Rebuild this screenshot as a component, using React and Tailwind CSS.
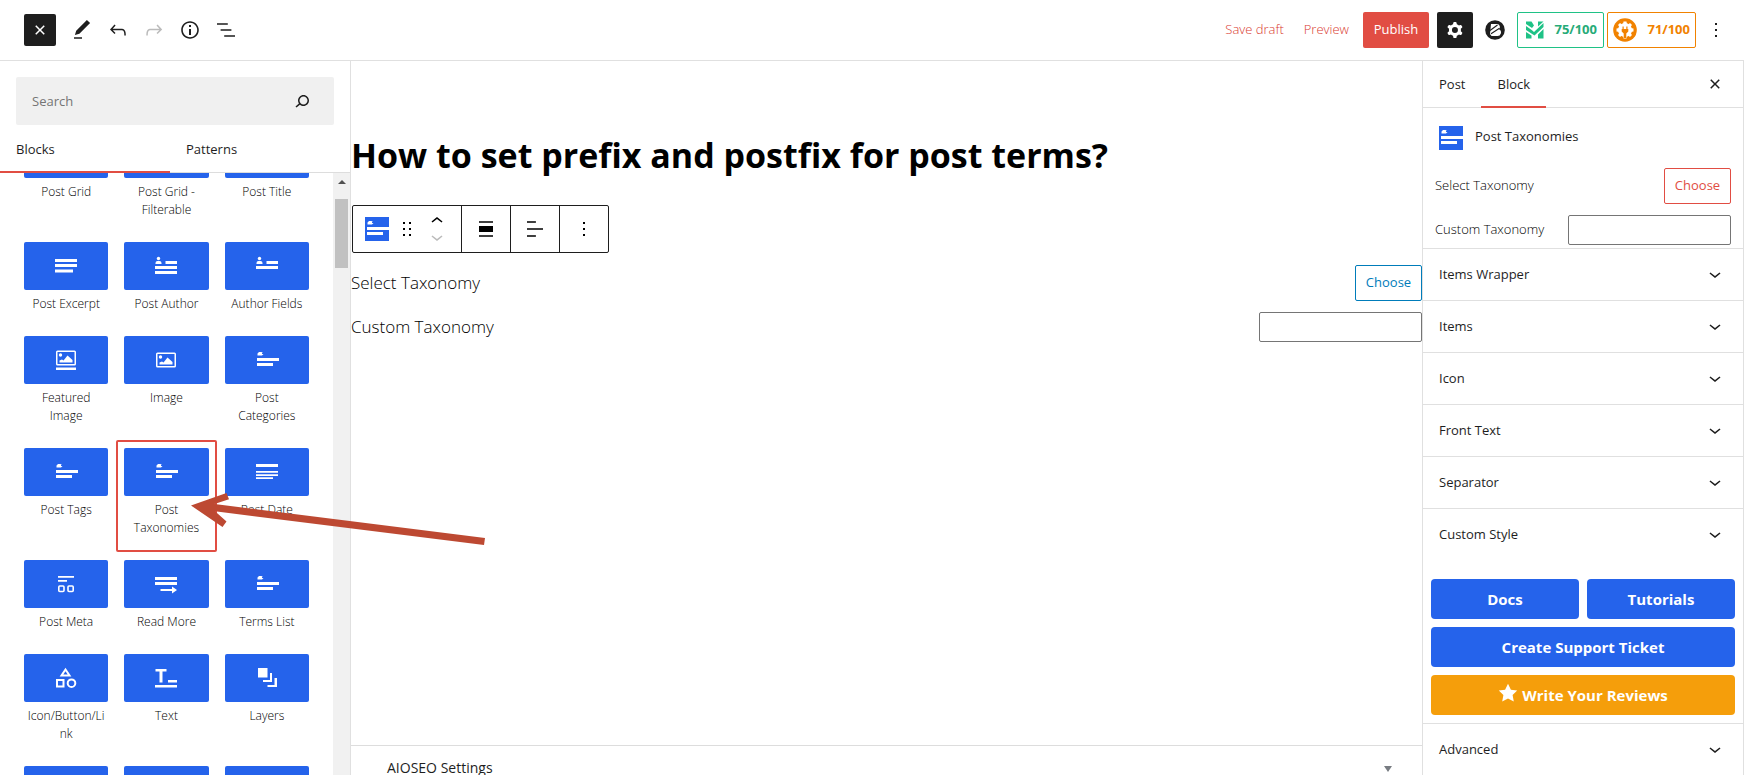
import React from "react";

const P = {
  edit: "M20.1 5.1L16.9 2 6.2 12.7l-1.3 4.4 4.5-1.3L20.1 5.1zM4 20.8h8v-1.5H4v1.5z",
  undo: "M18.3 11.7c-.6-.6-1.4-.9-2.3-.9H6.7l2.9-3.3-1.1-1-4.5 5L8.5 16l1-1-2.7-2.7H16c.5 0 .9.2 1.3.5 1 1 1 3.4 1 4.5v.3h1.5v-.2c0-1.5 0-4.3-1.5-5.7z",
  redo: "M15.6 6.5l-1.1 1 2.9 3.3H8c-.9 0-1.7.3-2.3.9-1.4 1.5-1.4 4.2-1.4 5.6v.2h1.5v-.3c0-1.1 0-3.5 1-4.5.3-.3.7-.5 1.3-.5h9.2L14.5 15l1.1 1.1 4.6-4.6-4.6-5z",
  info: "M12 3.2c-4.8 0-8.8 3.9-8.8 8.8 0 4.8 3.9 8.8 8.8 8.8 4.8 0 8.8-3.9 8.8-8.8 0-4.8-4-8.8-8.8-8.8zm0 16c-4 0-7.2-3.3-7.2-7.2C4.8 8 8 4.8 12 4.8s7.2 3.3 7.2 7.2c0 4-3.2 7.2-7.2 7.2zM11 17h2v-6h-2v6zm0-8h2V7h-2v2z",
  list: "M13.8 5.2H3v1.5h10.8V5.2zm-3.6 12v1.5H21v-1.5H10.2zm7.2-6H6.6v1.5h10.8v-1.5z",
  close: "M12 13.06l3.712 3.713 1.061-1.06L13.061 12l3.712-3.712-1.06-1.06L12 10.938 8.288 7.227l-1.061 1.06L10.939 12l-3.712 3.712 1.06 1.061L12 13.061z",
  search: "M13.5 6C10.5 6 8 8.5 8 11.5c0 1.1.3 2.1.9 3l-3.4 3 1 1.1 3.4-2.9c1 .9 2.2 1.4 3.6 1.4 3 0 5.5-2.5 5.5-5.5C19 8.5 16.5 6 13.5 6zm0 9.5c-2.2 0-4-1.8-4-4s1.8-4 4-4 4 1.8 4 4-1.8 4-4 4z",
  cog: "M10.289 4.836A1 1 0 0111.275 4h1.306a1 1 0 01.987.836l.244 1.466c.787.26 1.503.679 2.108 1.218l1.393-.522a1 1 0 011.216.437l.653 1.13a1 1 0 01-.23 1.273l-1.148.944a6.025 6.025 0 010 2.435l1.149.946a1 1 0 01.23 1.272l-.653 1.13a1 1 0 01-1.216.437l-1.394-.522c-.605.54-1.32.958-2.108 1.218l-.244 1.466a1 1 0 01-.987.836h-1.306a1 1 0 01-.986-.836l-.244-1.466a5.995 5.995 0 01-2.108-1.218l-1.394.522a1 1 0 01-1.217-.436l-.653-1.131a1 1 0 01.23-1.272l1.149-.946a6.026 6.026 0 010-2.435l-1.148-.944a1 1 0 01-.23-1.272l.653-1.131a1 1 0 011.217-.437l1.393.522a5.994 5.994 0 012.108-1.218l.244-1.466zM14.929 12a3 3 0 11-6 0 3 3 0 016 0z",
  down: "M17.5 11.6L12 16l-5.5-4.4.9-1.2L12 14l4.5-3.6 1 1.2z",
  up: "M6.5 12.4L12 8l5.5 4.4-.9 1.2L12 10l-4.5 3.6-1-1.2z",
  drag: "M8 7h2V5H8v2zm0 6h2v-2H8v2zm0 6h2v-2H8v2zm6-14v2h2V5h-2zm0 8h2v-2h-2v2zm0 6h2v-2h-2v2z",
  more: "M13 19h-2v-2h2v2zm0-6h-2v-2h2v2zm0-6h-2V5h2v2z",
  alignNone: "M5 15h14V9H5v6zm0 4.8h14v-1.5H5v1.5zM5 4.2v1.5h14V4.2H5z",
  alignLeft: "M4 19.8h8.9v-1.5H4v1.5zm8.9-15.6H4v1.5h8.9V4.2zm-8.9 7v1.5h16v-1.5H4z",
};

function Icon({ name, className = "size-6" }) {
  return (
    <svg viewBox="0 0 24 24" className={className} fill="currentColor" aria-hidden="true">
      <path fillRule="evenodd" clipRule="evenodd" d={P[name]} />
    </svg>
  );
}

const pic = (
  <path
    fillRule="evenodd"
    d="M2 6a1.500 1.500 0 0 1 1.500-1.500h17A1.500 1.500 0 0 1 22 6v12a1.500 1.500 0 0 1-1.500 1.500h-17A1.500 1.500 0 0 1 2 18zm1.500 0v12h17V6z"
  />
);

const glyphs = {
  terms: (
    <>
      <path d="M2.500 7.500v-2L4 4h2.500l1.500 1h-1v1h1.500L7 7.500z" />
      <path d="M2 10h22v3H2zM2 15h16v3H2z" />
    </>
  ),
  excerpt: <path d="M1 5h22v3H1zM1 10h22v3H1zM1 15.500h18v3H1z" />,
  author: (
    <>
      <circle cx="4.500" cy="4.500" r="1.700" />
      <path d="M1.500 10V9a2 2 0 0 1 2-2h2a2 2 0 0 1 2 2v1zM11.500 7H23v3H11.500zM1 12h22v3H1zM1 17h22v3H1z" />
    </>
  ),
  fields: (
    <>
      <circle cx="4.500" cy="4.500" r="1.700" />
      <path d="M1.500 10V9a2 2 0 0 1 2-2h2a2 2 0 0 1 2 2v1zM11.500 7H23v3H11.500zM1 12h22v3H1z" />
    </>
  ),
  featured: (
    <>
      <g transform="translate(0 -2)">{pic}</g>
      <circle cx="6.500" cy="7" r="1.700" />
      <path d="M5.500 14.500v-2l2.500-1 1.500 1 4-5 5 4.500v2.500zM2 19.500h20V22H2z" />
    </>
  ),
  image: (
    <>
      {pic}
      <circle cx="6.500" cy="9" r="1.700" />
      <path d="M5.500 16.500v-2l2.500-1 1.500 1 4-5 5 4.500v2.500z" />
    </>
  ),
  date: <path d="M1 4h22v3H1zM1 11h22v1.800H1zM1 14.200h22V16H1zM1 17.300h17V19H1z" />,
  meta: (
    <>
      <path d="M4 4h16v1.800H4zM4 8h9v1.800H4z" />
      <rect x="4.800" y="14" width="5.200" height="5.500" rx="1" fill="none" stroke="currentColor" strokeWidth="1.600" />
      <rect x="14" y="14" width="5.200" height="5.500" rx="1" fill="none" stroke="currentColor" strokeWidth="1.600" />
    </>
  ),
  readmore: <path d="M1 5h22v3H1zM1 10h22v3H1zM6.500 17H18v-2.500l5 3.500-5 3.500V19H6.500z" />,
  shapes: (
    <g fill="none" stroke="currentColor" strokeWidth="2">
      <path d="M11.500 3.500L15.500 9.500h-8z" />
      <path d="M3 14h6.500v6.500H3z" />
      <circle cx="17.500" cy="17.200" r="3.800" />
    </g>
  ),
  text: <path d="M1.500 3h11v2.500H8.500v11h-3v-11h-4zM14 14h9v2.500h-9zM1 19h22v2.500H1z" />,
  layers: <path d="M3 2h9.500v9.500H3zM15 7h2v9H8v-2h7zM19.500 12h2.500v9h-9.500v-2h7z" />,
};

function Glyph({ name }) {
  return (
    <svg viewBox="0 0 24 24" className="size-6" fill="currentColor" aria-hidden="true">
      {glyphs[name]}
    </svg>
  );
}

const blocks = [
  { label: "Post Grid", glyph: "excerpt" },
  { label: "Post Grid - Filterable", glyph: "excerpt" },
  { label: "Post Title", glyph: "excerpt" },
  { label: "Post Excerpt", glyph: "excerpt" },
  { label: "Post Author", glyph: "author" },
  { label: "Author Fields", glyph: "fields" },
  { label: "Featured Image", glyph: "featured" },
  { label: "Image", glyph: "image" },
  { label: "Post Categories", glyph: "terms" },
  { label: "Post Tags", glyph: "terms" },
  { label: "Post Taxonomies", glyph: "terms", active: true },
  { label: "Post Date", glyph: "date" },
  { label: "Post Meta", glyph: "meta" },
  { label: "Read More", glyph: "readmore" },
  { label: "Terms List", glyph: "terms" },
  { label: "Icon/Button/Link", glyph: "shapes", breakAll: true },
  { label: "Text", glyph: "text" },
  { label: "Layers", glyph: "layers" },
];

function BlockItem({ label, glyph, active, breakAll }) {
  return (
    <button
      type="button"
      className={
        "flex flex-col rounded-xs border-2 px-1.5 pt-1.5 pb-[13px] " +
        (active ? "border-[#e14d43]" : "border-transparent")
      }
    >
      <span className="flex h-12 w-full shrink-0 items-center justify-center rounded-xs bg-[#2563eb] text-white">
        {glyph && <Glyph name={glyph} />}
      </span>
      <span
        className={
          "w-full pt-[5px] text-center text-[12px] leading-[18px] font-light text-black " +
          (breakAll ? "px-0.5 break-all" : "px-1")
        }
      >
        {label}
      </span>
    </button>
  );
}

function BlockBadge() {
  return (
    <span className="flex size-6 shrink-0 bg-[#2563eb] text-white">
      <Glyph name="terms" />
    </span>
  );
}

function Header() {
  return (
    <header className="flex h-[61px] shrink-0 items-center justify-between border-b border-[#e0e0e0] pr-4 pl-6">
      <div className="flex items-center gap-3">
        <button type="button" aria-label="Close inserter" className="mr-0.5 flex size-8 items-center justify-center rounded-xs bg-[#1e1e1e] text-white">
          <Icon name="close" />
        </button>
        <button type="button" aria-label="Tools"><Icon name="edit" /></button>
        <button type="button" aria-label="Undo"><Icon name="undo" /></button>
        <button type="button" aria-label="Redo" className="text-[#bbb]"><Icon name="redo" /></button>
        <button type="button" aria-label="Details"><Icon name="info" /></button>
        <button type="button" aria-label="List view"><Icon name="list" /></button>
      </div>
      <div className="flex items-center text-[13px]">
        <button type="button" className="mr-5 font-light text-[#d93a2f]">Save draft</button>
        <button type="button" className="mr-3.5 font-light text-[#d93a2f]">Preview</button>
        <button type="button" className="mr-2 h-9 w-[66px] rounded-xs bg-[#e14d43] text-white">Publish</button>
        <button type="button" aria-label="Settings" className="mr-3 flex size-9 items-center justify-center rounded-xs bg-[#1e1e1e] text-white">
          <Icon name="cog" />
        </button>
        <button type="button" aria-label="Block options" className="mr-3">
          <svg viewBox="0 0 20 20" className="size-5" aria-hidden="true">
            <circle cx="10" cy="10" r="9.800" fill="#1e1e1e" />
            <path d="M6 4h6a3 3 0 0 1 2 5.200 3.600 3.600 0 0 1-2 6.800H6.500L5 14z" fill="#fff" />
            <path d="M5 10.500L12.500 5M6 13.800L14.500 8.300" stroke="#1e1e1e" strokeWidth="1.100" />
          </svg>
        </button>
        <button type="button" className="mr-[3px] flex h-9 w-[87px] items-center justify-between rounded-xs border border-[#1fc286] pr-1.5 pl-2 text-[13px] font-bold text-[#27ab78]">
          <svg viewBox="0 0 18 18" className="size-[18px]" fill="#1fc286" aria-hidden="true">
            <path d="M0 .5h5.500L8 4.500 6 7 0 3zM0 5l6 4.200L8 11l9.500-9v4L8.500 14.500 0 9zM12 .5h5.500L12 5.500zM0 11l5.500 3.500v3H0zM17.500 8v9.500H12V13.500z" />
          </svg>
          75/100
        </button>
        <button type="button" className="mr-2 flex h-9 w-[89px] items-center justify-between rounded-xs border border-[#f18200] px-[5px] text-[13px] font-bold text-[#f18200]">
          <svg viewBox="0 0 24 24" className="size-6" aria-hidden="true">
            <circle cx="12" cy="12" r="11.800" fill="#f18200" />
            <g fill="#fff">
              <circle cx="12" cy="12" r="7" />
              <path d="M10.500 3.500h3l.5 3h-4zM10.500 20.500h3l.5-3h-4zM3.500 10.500v3l3 .5v-4zM20.500 10.500v3l-3 .5v-4zM5 7l2-2 2.500 2L7 9.500zM19 7l-2-2-2.500 2L17 9.500zM5 17l2 2 2.500-2L7 14.500zM19 17l-2 2-2.500-2 2.500-2.500z" />
            </g>
            <path d="M9.500 8.500h1.200V11h2.600V8.500h1.200V11h.8v2.500l-2 2V20h-2.600v-4.500l-2-2V11h.8z" fill="#f18200" />
          </svg>
          71/100
        </button>
        <button type="button" aria-label="Options"><Icon name="more" /></button>
      </div>
    </header>
  );
}

function Inserter() {
  return (
    <aside className="flex w-[351px] shrink-0 flex-col border-r border-[#e0e0e0]">
      <label className="mx-4 mt-4 flex h-12 shrink-0 items-center rounded-xs bg-[#f0f0f0] pr-5 pl-4">
        <input type="text" aria-label="Search" placeholder="Search" className="min-w-0 flex-1 bg-transparent pt-0.5 text-[13px] outline-none placeholder:text-[#757575]" />
        <Icon name="search" />
      </label>
      <div role="tablist" className="flex h-12 shrink-0 border-b border-[#ddd] text-[13px]">
        <button type="button" role="tab" aria-selected="true" className="-mb-px flex-1 border-b-2 border-[#e14d43] px-4 pt-1 text-left">Blocks</button>
        <button type="button" role="tab" aria-selected="false" className="flex-1 px-4 pt-0.5 text-left">Patterns</button>
        <span className="w-2.5" />
      </div>
      <div className="flex min-h-0 flex-1">
        <div className="min-w-0 flex-1 overflow-hidden px-4">
          <div className="-mt-[51px] grid grid-cols-3">
            {blocks.map((b) => (
              <BlockItem key={b.label} {...b} />
            ))}
            <BlockItem />
            <BlockItem />
            <BlockItem />
          </div>
        </div>
        <div className="flex w-[17px] flex-col items-center bg-[#f1f1f1] pt-[7px]">
          <svg viewBox="0 0 8 4" className="h-1 w-2" fill="#505050" aria-hidden="true"><path d="M4 0l4 4H0z" /></svg>
          <div className="mt-[15px] h-[69px] w-[13px] bg-[#c1c1c1]" />
        </div>
      </div>
    </aside>
  );
}

function BlockToolbar() {
  return (
    <div role="toolbar" aria-label="Block tools" className="ml-px flex h-12 w-fit divide-x divide-[#1e1e1e] rounded-xs border border-[#1e1e1e]">
      <div className="flex w-[109px] items-center pl-3">
        <button type="button" aria-label="Post Taxonomies"><BlockBadge /></button>
        <button type="button" aria-label="Drag" className="ml-1.5"><Icon name="drag" /></button>
        <div className="ml-1.5 flex flex-col">
          <button type="button" aria-label="Move up" className="flex h-4 items-center overflow-hidden"><Icon name="up" className="size-6 shrink-0" /></button>
          <button type="button" aria-label="Move down" className="flex h-4 items-center overflow-hidden text-[#bbb]"><Icon name="down" className="size-6 shrink-0" /></button>
        </div>
      </div>
      <button type="button" aria-label="Align" className="flex w-[49px] items-center justify-center"><Icon name="alignNone" /></button>
      <button type="button" aria-label="Align text" className="flex w-[49px] items-center justify-center"><Icon name="alignLeft" /></button>
      <button type="button" aria-label="Options" className="flex w-12 items-center justify-center"><Icon name="more" /></button>
    </div>
  );
}

function Canvas() {
  return (
    <main className="flex min-w-0 flex-1 flex-col text-black">
      <div className="flex-1 pt-16">
        <h1 className="text-[34px] leading-[60px] font-bold">How to set prefix and postfix for post terms?</h1>
        <div className="pt-5"><BlockToolbar /></div>
        <div className="flex items-center justify-between pt-3 text-[17px] font-light">
          <span>Select Taxonomy</span>
          <button type="button" className="h-9 w-[67px] rounded-xs border border-[#007cba] text-[13px] font-normal text-[#007cba]">Choose</button>
        </div>
        <div className="flex items-center justify-between pt-[11px] text-[17px] font-light">
          <label htmlFor="canvas-tax">Custom Taxonomy</label>
          <input id="canvas-tax" type="text" className="h-[30px] w-[163px] rounded-xs border border-[#757575]" />
        </div>
      </div>
      <button type="button" className="flex h-[30px] shrink-0 items-start justify-between border-t border-[#ddd] pt-3 pr-[30px] pl-9 text-[14px] leading-5 font-medium text-[#1e1e1e]">
        AIOSEO Settings
        <svg viewBox="0 0 8 6" className="mt-2 h-1.5 w-2" fill="#787c82" aria-hidden="true"><path d="M0 0h8L4 6z" /></svg>
      </button>
    </main>
  );
}

function Panel({ title }) {
  return (
    <button type="button" className="flex h-13 w-full items-center justify-between border-t border-[#e0e0e0] px-4 pt-px text-[13px]">
      {title}
      <Icon name="down" className="mb-0.5 size-6" />
    </button>
  );
}

function Settings() {
  return (
    <aside className="w-[322px] shrink-0 overflow-hidden border-x border-[#e0e0e0]">
      <div className="flex h-[47px] items-center border-b border-[#e0e0e0] pr-4 text-[13px]">
        <button type="button" className="px-4 pt-0.5">Post</button>
        <button type="button" className="-mb-px h-[47px] border-b-2 border-[#e14d43] px-4 pt-0.5">Block</button>
        <button type="button" aria-label="Close settings" className="ml-auto"><Icon name="close" /></button>
      </div>
      <div className="flex items-start gap-3 px-4 pt-[18px]">
        <BlockBadge />
        <h2 className="text-[13px] leading-5">Post Taxonomies</h2>
      </div>
      <div className="flex items-center justify-between px-3 pt-[18px] text-[13px]">
        <span className="font-light text-black">Select Taxonomy</span>
        <button type="button" className="h-9 w-[67px] rounded-xs border border-[#e14d43] text-[#e14d43]">Choose</button>
      </div>
      <div className="flex items-center justify-between px-3 pt-[11px] pb-[3px] text-[13px]">
        <label htmlFor="side-tax" className="font-light text-black">Custom Taxonomy</label>
        <input id="side-tax" type="text" className="h-[30px] w-[163px] rounded-xs border border-[#757575]" />
      </div>
      {["Items Wrapper", "Items", "Icon", "Front Text", "Separator", "Custom Style"].map((t) => (
        <Panel key={t} title={t} />
      ))}
      <div className="grid grid-cols-2 gap-2 px-2 pt-[19px] pb-2 text-[15px] font-bold text-white">
        <a href="#docs" className="flex h-10 items-center justify-center rounded-sm bg-[#2563eb]">Docs</a>
        <a href="#tutorials" className="flex h-10 items-center justify-center rounded-sm bg-[#2563eb]">Tutorials</a>
        <a href="#ticket" className="col-span-2 flex h-10 items-center justify-center rounded-sm bg-[#2563eb]">Create Support Ticket</a>
        <a href="#reviews" className="col-span-2 flex h-10 items-center justify-center gap-1 rounded-sm bg-[#f59e0b]">
          <svg viewBox="0 0 20 20" className="mb-1 size-5" fill="currentColor" aria-hidden="true">
            <path d="M10 .8l2.900 6 6.300.8-4.600 4.500 1.200 6.500L10 15.500l-5.800 3.100 1.200-6.500L.8 7.600l6.300-.8z" />
          </svg>
          Write Your Reviews
        </a>
      </div>
      <Panel title="Advanced" />
    </aside>
  );
}

export default function App() {
  return (
    <div className="relative flex h-screen flex-col overflow-hidden bg-white font-['Open_Sans','Noto_Sans',sans-serif] text-[#1e1e1e]">
      <Header />
      <div className="flex min-h-0 flex-1">
        <Inserter />
        <Canvas />
        <Settings />
      </div>
      <svg viewBox="0 0 296 56" className="pointer-events-none absolute top-[492px] left-[190px] h-14 w-[296px]" fill="#bd4932" aria-hidden="true">
        <path d="M1 13.500L36.500 1l2.500 6.200L24.500 12 295 46l-1 7L25 19.300l11.500 10.200-4 5.500z" />
      </svg>
    </div>
  );
}
